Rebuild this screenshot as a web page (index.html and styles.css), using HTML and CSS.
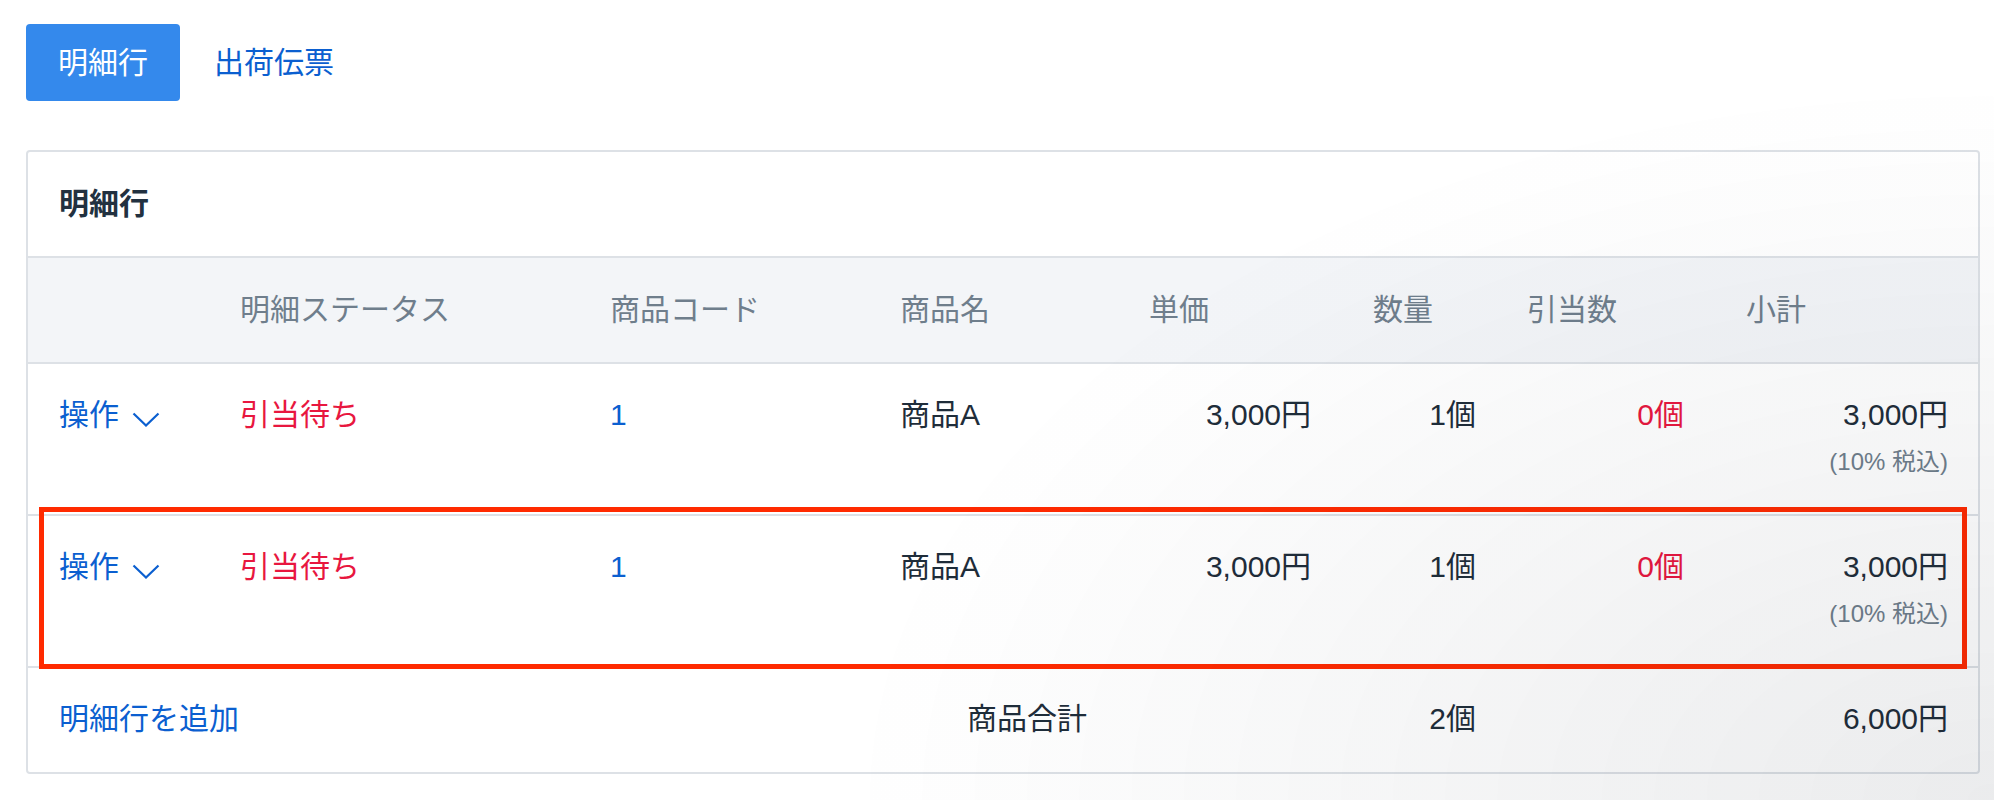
FILE: index.html
```html
<!DOCTYPE html>
<html lang="ja">
<head>
<meta charset="utf-8">
<title>明細行</title>
<link rel="stylesheet" href="styles.css">
</head>
<body>
<div class="page">
  <nav class="tabs">
    <a class="tab tab-active">明細行</a>
    <a class="tab">出荷伝票</a>
  </nav>

  <section class="card">
    <header class="card-title">明細行</header>

    <div class="cols head-row">
      <div class="c"></div>
      <div class="c">明細ステータス</div>
      <div class="c">商品コード</div>
      <div class="c">商品名</div>
      <div class="c">単価</div>
      <div class="c">数量</div>
      <div class="c">引当数</div>
      <div class="c">小計</div>
    </div>

    <div class="cols data-row">
      <div class="c first link">操作<svg class="chev" width="28" height="15" viewBox="0 0 28 15"><polyline points="1.5,1.5 14,13.5 26.5,1.5" fill="none" stroke="currentColor" stroke-width="2.2"/></svg></div>
      <div class="c alert">引当待ち</div>
      <div class="c link">1</div>
      <div class="c">商品A</div>
      <div class="c num">3,000円</div>
      <div class="c num qty">1個</div>
      <div class="c num alert">0個</div>
      <div class="c num">3,000円<div class="sub">(10% 税込)</div></div>
    </div>

    <div class="cols data-row marked">
      <div class="c first link">操作<svg class="chev" width="28" height="15" viewBox="0 0 28 15"><polyline points="1.5,1.5 14,13.5 26.5,1.5" fill="none" stroke="currentColor" stroke-width="2.2"/></svg></div>
      <div class="c alert">引当待ち</div>
      <div class="c link">1</div>
      <div class="c">商品A</div>
      <div class="c num">3,000円</div>
      <div class="c num qty">1個</div>
      <div class="c num alert">0個</div>
      <div class="c num">3,000円<div class="sub">(10% 税込)</div></div>
      <span class="annot"></span>
    </div>

    <div class="cols foot-row">
      <div class="c first link span3">明細行を追加</div>
      <div class="c num">商品合計</div>
      <div class="c"></div>
      <div class="c num qty">2個</div>
      <div class="c"></div>
      <div class="c num">6,000円</div>
    </div>
  </section>
</div>
</body>
</html>
```

FILE: styles.css
```css
html, body {
  margin: 0;
  padding: 0;
  background: #ffffff;
}

body {
  font-family: "Liberation Sans", "Noto Sans CJK JP", sans-serif;
  font-size: 30px;
  line-height: 44px;
  color: #1f2d3a;
  min-height: 800px;
}

body::after {
  content: "";
  position: fixed;
  inset: 0;
  pointer-events: none;
  background: radial-gradient(1150px 720px at 100% 100%, rgba(20, 30, 45, 0.085) 0, rgba(20, 30, 45, 0) 100%);
}

.page {
  padding: 24px 14px 0 26px;
}

.tabs {
  display: flex;
  gap: 2px;
}

.tab {
  display: block;
  padding: 16px 32px;
  line-height: 45px;
  color: #0b5fd0;
  border-radius: 4px;
  cursor: pointer;
}

.tab-active {
  background: #3489ec;
  color: #ffffff;
}

.card {
  margin-top: 49px;
  border: 2px solid #dde1e6;
  border-radius: 4px;
}

.card-title {
  padding: 30px 31px 30px;
  font-weight: 700;
  color: #223140;
  border-bottom: 2px solid #dde1e6;
}

.cols {
  display: grid;
  grid-template-columns: 180px 370px 290px 249px 224px 154px 219px 1fr;
}

.c {
  padding-left: 32px;
  white-space: nowrap;
}

.c.first {
  padding-left: 31px;
}

.c.num {
  text-align: right;
  padding-left: 0;
  padding-right: 30px;
}

.c.num.qty {
  padding-right: 19px;
}

.span3 {
  grid-column: 1 / 4;
}

.head-row {
  background: #f3f5f8;
  color: #6f7e8c;
  padding: 30px 0 30px;
  border-bottom: 2px solid #dde1e6;
}

.data-row {
  padding: 29px 0 37px;
  border-bottom: 2px solid #dde1e6;
}

.foot-row {
  padding: 29px 0 31px;
}

.link {
  color: #0b5fd0;
}

.alert {
  color: #e8173f;
}

.chev {
  display: inline-block;
  margin-left: 13px;
  vertical-align: -2px;
}

.sub {
  margin-top: 10px;
  font-size: 24px;
  line-height: 30px;
  color: #6f7e8c;
}

.marked {
  position: relative;
}

.annot {
  position: absolute;
  top: -9px;
  left: 11px;
  right: 11px;
  bottom: -3px;
  border: 5px solid #ff2a00;
  pointer-events: none;
}
```
